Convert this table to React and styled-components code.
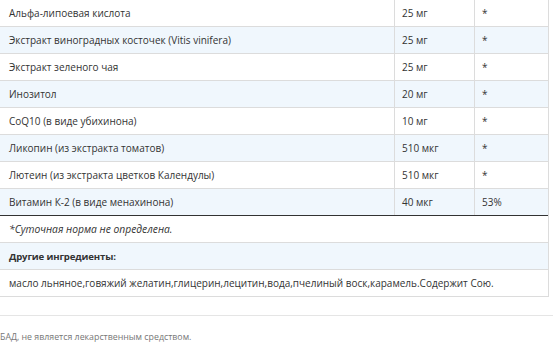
import React from "react";
import styled, { createGlobalStyle } from "styled-components";

const Global = createGlobalStyle`
  html, body { margin: 0; padding: 0; background: #fff; }
  body { font-family: "Open Sans", "DejaVu Sans", sans-serif; color: #333; overflow: hidden; }
`;

const Page = styled.div`
  width: 553px;
  height: 353px;
  overflow: hidden;
`;

const Table = styled.div`
  width: 548px;
  margin-left: -1px;
  border-left: 1px solid #dcdcdc;
  border-right: 1px solid #dcdcdc;
`;

const Row = styled.div`
  display: grid;
  grid-template-columns: ${(p) => (p.$full ? "1fr" : "395px 80px 1fr")};
  height: 26px;
  background: ${(p) => (p.$shade ? "#f0f7fd" : "#fff")};
  border-bottom: 1px solid ${(p) => (p.$dark ? "#333" : "#dcdcdc")};
`;

const Cell = styled.div`
  display: flex;
  align-items: center;
  padding-left: ${(p) => p.$pad || 7}px;
  font-size: 10px;
  white-space: nowrap;
  border-right: ${(p) => (p.$sep ? "1px solid #dcdcdc" : "none")};
`;

const Note = styled(Cell)`
  font-size: 10.3px;
  font-style: italic;
`;

const Heading = styled(Cell)`
  font-size: 9.6px;
  font-weight: 700;
  letter-spacing: -0.15px;
`;

const Divider = styled.div`
  margin-top: 18px;
  height: 1px;
  background: #e5e5e5;
`;

const Footer = styled.div`
  padding: 16px 0 0 0;
  font-size: 8.8px;
  color: #777;
  line-height: 10px;
`;

const rows = [
  ["Альфа-липоевая кислота", "25 мг", "*"],
  ["Экстракт виноградных косточек (Vitis vinifera)", "25 мг", "*"],
  ["Экстракт зеленого чая", "25 мг", "*"],
  ["Инозитол", "20 мг", "*"],
  ["CoQ10 (в виде убихинона)", "10 мг", "*"],
  ["Ликопин (из экстракта томатов)", "510 мкг", "*"],
  ["Лютеин (из экстракта цветков Календулы)", "510 мкг", "*"],
  ["Витамин К-2 (в виде менахинона)", "40 мкг", "53%"],
];

export default function App() {
  return (
    <Page>
      <Global />
      <Table>
        {rows.map(([name, amount, dv], i) => (
          <Row key={name} $shade={i % 2 === 1} $dark={i === rows.length - 1}>
            <Cell $pad={9} $sep>{name}</Cell>
            <Cell $sep>{amount}</Cell>
            <Cell>{dv}</Cell>
          </Row>
        ))}
        <Row $full>
          <Note $pad={9}>*Суточная норма не определена.</Note>
        </Row>
        <Row $full $shade>
          <Heading $pad={9}>Другие ингредиенты:</Heading>
        </Row>
        <Row $full>
          <Cell $pad={9}>
            масло льняное,говяжий желатин,глицерин,лецитин,вода,пчелиный воск,карамель.Содержит Сою.
          </Cell>
        </Row>
      </Table>
      <Divider />
      <Footer>БАД, не является лекарственным средством.</Footer>
    </Page>
  );
}
